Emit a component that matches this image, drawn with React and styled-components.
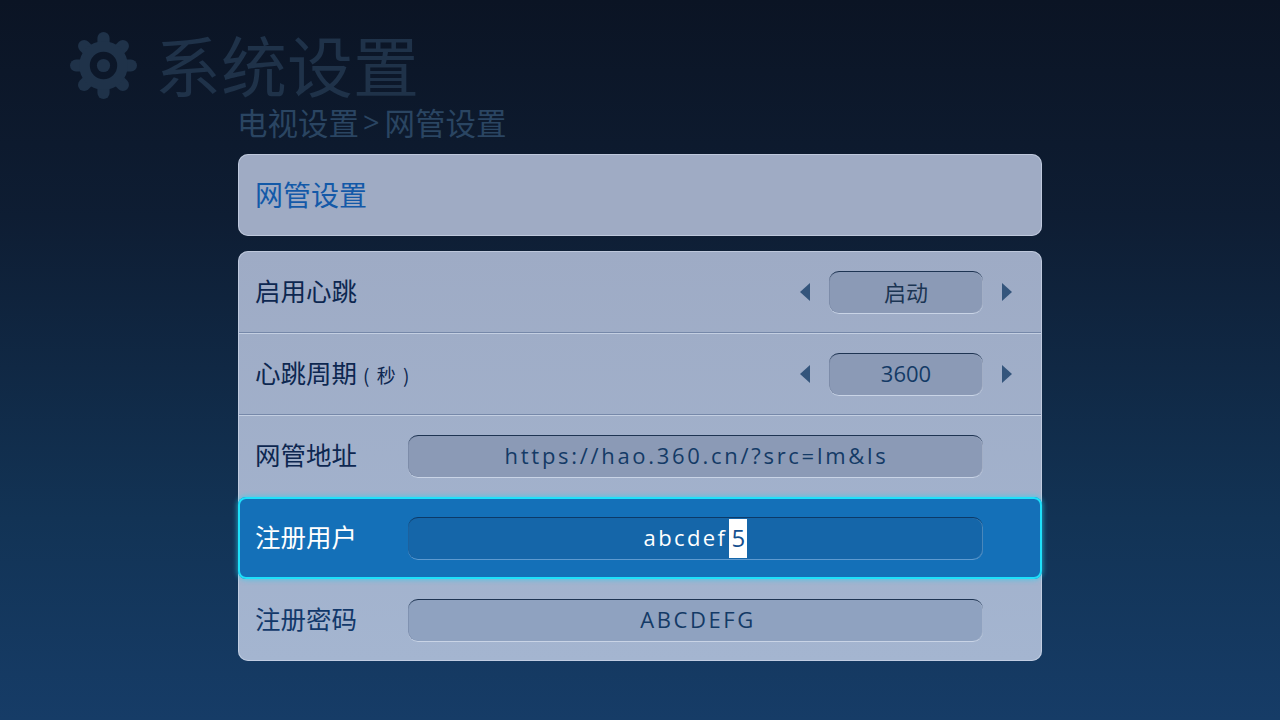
import React from 'react';
import styled, { createGlobalStyle } from 'styled-components';

const GlobalStyle = createGlobalStyle`
  html, body {
    margin: 0;
    padding: 0;
    width: 1280px;
    height: 720px;
    overflow: hidden;
    background: #0b1425;
  }
  * { box-sizing: border-box; }
`

const Page = styled.div`
  width: 1280px;
  height: 720px;
  padding-top: 29px;
  background: linear-gradient(180deg, #0b1424 0%, #0e1d33 30%, #123355 72%, #163c67 100%);
  font-family: "Open Sans", "Noto Sans CJK SC", sans-serif;
`

const Header = styled.div`
  display: flex;
  align-items: center;
  height: 72px;
  padding-left: 70px;
`

const Gear = styled.svg`
  width: 67px;
  height: 67px;
  fill: #1f3249;
  flex: none;
`

const PageTitle = styled.h1`
  margin: -5px 0 0 18px;
  font-family: "Noto Sans CJK SC", sans-serif;
  font-size: 66px;
  line-height: 72px;
  font-weight: 400;
  color: #1f3249;
`

const Breadcrumb = styled.div`
  display: flex;
  align-items: center;
  height: 32px;
  margin: 5px 0 0 237px;
  font-family: "Noto Sans CJK SC", sans-serif;
  font-size: 30.5px;
  line-height: 32px;
  font-weight: 400;
  color: #2a4562;
`

const Separator = styled.span`
  margin: 0 5px 0 4px;
  font-family: "Open Sans", sans-serif;
  font-size: 29px;
`

const Panel = styled.div`
  width: 804px;
  margin: ${({ $top }) => $top}px 0 0 238px;
  border-radius: 10px;
  background: ${({ $plain }) => $plain
    ? '#9fabc4'
    : 'linear-gradient(180deg, #9eabc5 0%, #a4b5d0 100%)'};
  box-shadow: inset 0 0 0 1px rgba(222, 230, 244, 0.5);
`

const PanelTitle = styled.div`
  display: flex;
  align-items: center;
  height: 82px;
  padding: 0 0 2px 17px;
  font-family: "Noto Sans CJK SC", sans-serif;
  font-size: 28px;
  font-weight: 400;
  color: #1359a8;
`

const Row = styled.div`
  position: relative;
  display: flex;
  align-items: center;
  height: 82px;
  padding-left: 17px;
  border-radius: ${({ $active }) => $active ? '8px' : '0'};
  color: ${({ $active }) => $active ? '#ffffff' : '#0d2750'};
  background: ${({ $active }) => $active ? '#1470b8' : 'transparent'};
  box-shadow: ${({ $active }) => $active
    ? 'inset 0 0 0 2px #1fe0fa, 0 0 5px 1px rgba(40, 210, 245, 0.6)'
    : 'none'};
  z-index: ${({ $active }) => $active ? 2 : 1};

  & + &::before {
    content: '';
    display: ${({ $active }) => $active ? 'none' : 'block'};
    position: absolute;
    left: 1px;
    right: 1px;
    top: -1px;
    height: 2px;
    background: linear-gradient(180deg, #7688a9 50%, #c4cfe2 50%);
  }
`

const Label = styled.div`
  width: 153px;
  flex: none;
  padding-bottom: 5px;
  font-family: "Noto Sans CJK SC", sans-serif;
  font-size: 25.5px;
  font-weight: 400;
  white-space: nowrap;
  color: ${({ $muted }) => $muted ? '#12386a' : 'inherit'};
`

const Unit = styled.span`
  margin-left: 6px;
  font-size: 19px;
  word-spacing: 3px;
`

const Well = styled.div`
  display: flex;
  align-items: center;
  justify-content: center;
  height: 43px;
  padding-bottom: 2px;
  border-radius: 10px;
  font-size: 22px;
  letter-spacing: ${({ $spacing }) => $spacing || 0}px;
  color: ${({ $active, $color }) => $active ? '#ffffff' : ($color || '#143a66')};
  background: ${({ $active }) => $active ? '#1566a9' : '#8b9ab6'};
  border-top: 1px solid ${({ $active }) => $active ? '#0c3a68' : '#1e3452'};
  border-bottom: 1px solid ${({ $active }) => $active ? '#5d9ad0' : '#c9d4e6'};
  box-shadow: inset 1px 0 0 rgba(60, 80, 110, 0.18), inset -1px 0 0 rgba(230, 235, 245, 0.25);
`

const Field = styled(Well)`
  width: 575px;
  padding-left: ${({ $shift }) => $shift || 0}px;
  background: ${({ $active, $light }) => $active ? '#1566a9' : ($light ? '#8fa2c0' : '#8b9ab6')};
`

const Selector = styled.div`
  display: flex;
  align-items: center;
  margin-left: auto;
  margin-right: 30px;
`

const SelectorValue = styled(Well)`
  width: 154px;
  margin: 0 19px;
  font-family: "Open Sans", "Noto Sans CJK SC", sans-serif;
`

const Arrow = styled.span`
  width: 0;
  height: 0;
  border-top: 9px solid transparent;
  border-bottom: 9px solid transparent;
  border-left: ${({ $dir }) => $dir === 'right' ? '10px solid #34557c' : 'none'};
  border-right: ${({ $dir }) => $dir === 'left' ? '10px solid #34557c' : 'none'};
`

const Caret = styled.span`
  display: inline-flex;
  align-items: center;
  justify-content: center;
  width: 18px;
  height: 39px;
  margin: 0 0 -2px 2px;
  padding-bottom: 1px;
  font-size: 24px;
  letter-spacing: 0;
  background: #ffffff;
  color: #14508f;
`

const GearIcon = () => {
  const teeth = [0, 45, 90, 135, 180, 225, 270, 315];
  return (
    <Gear viewBox="0 0 66 66">
      {teeth.map((deg) => (
        <rect key={deg} x="27" y="0" width="12" height="18" rx="6" transform={`rotate(${deg} 33 33)`} />
      ))}
      <path
        fillRule="evenodd"
        d="M33 9a24 24 0 1 0 0 48a24 24 0 1 0 0-48zM33 19.500a13.500 13.500 0 1 1 0 27a13.500 13.500 0 1 1 0-27z"
      />
      <circle cx="33" cy="33" r="6.5" />
    </Gear>
  );
}

const App = () => {
  return (
    <Page>
      <GlobalStyle />
      <Header>
        <GearIcon />
        <PageTitle>系统设置</PageTitle>
      </Header>
      <Breadcrumb>
        电视设置<Separator>&gt;</Separator>网管设置
      </Breadcrumb>
      <Panel $plain $top={16}>
        <PanelTitle>网管设置</PanelTitle>
      </Panel>
      <Panel $top={15}>
        <Row>
          <Label>启用心跳</Label>
          <Selector>
            <Arrow $dir="left" />
            <SelectorValue $color="#1b3553">启动</SelectorValue>
            <Arrow $dir="right" />
          </Selector>
        </Row>
        <Row>
          <Label>心跳周期<Unit>( 秒 )</Unit></Label>
          <Selector>
            <Arrow $dir="left" />
            <SelectorValue>3600</SelectorValue>
            <Arrow $dir="right" />
          </Selector>
        </Row>
        <Row>
          <Label>网管地址</Label>
          <Field $spacing={2.7} $shift={2}>https://hao.360.cn/?src=lm&amp;ls</Field>
        </Row>
        <Row $active>
          <Label>注册用户</Label>
          <Field $active $spacing={2.4}>abcdef<Caret>5</Caret></Field>
        </Row>
        <Row>
          <Label $muted>注册密码</Label>
          <Field $light $spacing={2.6} $shift={5}>ABCDEFG</Field>
        </Row>
      </Panel>
    </Page>
  );
}

export default App;
